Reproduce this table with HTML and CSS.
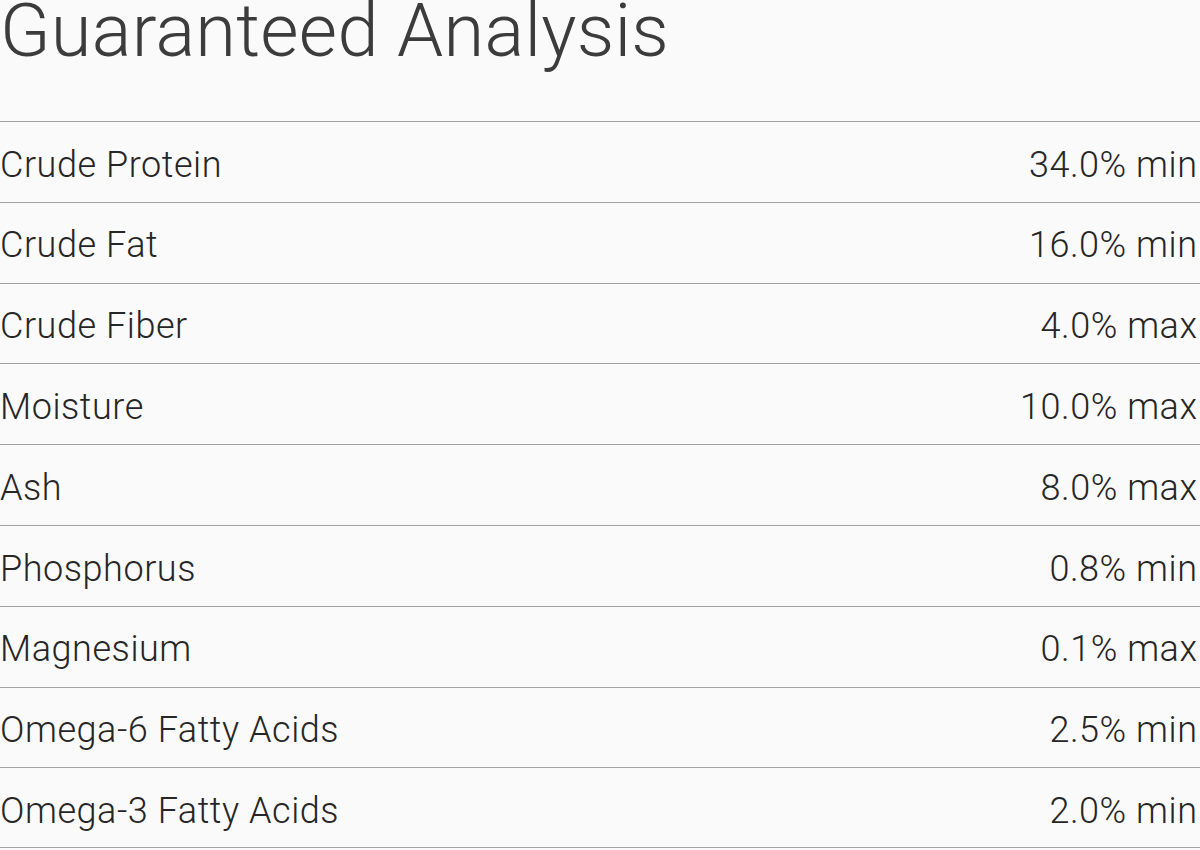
FILE: index.html
```html
<!DOCTYPE html>
<html>
<head>
<meta charset="utf-8">
<link rel="stylesheet" href="styles.css">
</head>
<body>
<div class="page">
  <h1 class="title">Guaranteed Analysis</h1>
  <div class="table">
    <div class="row"><span class="name">Crude Protein</span><span class="value">34.0% min</span></div>
    <div class="row"><span class="name">Crude Fat</span><span class="value">16.0% min</span></div>
    <div class="row"><span class="name">Crude Fiber</span><span class="value">4.0% max</span></div>
    <div class="row"><span class="name">Moisture</span><span class="value">10.0% max</span></div>
    <div class="row"><span class="name">Ash</span><span class="value">8.0% max</span></div>
    <div class="row"><span class="name">Phosphorus</span><span class="value">0.8% min</span></div>
    <div class="row"><span class="name">Magnesium</span><span class="value">0.1% max</span></div>
    <div class="row"><span class="name">Omega-6 Fatty Acids</span><span class="value">2.5% min</span></div>
    <div class="row"><span class="name">Omega-3 Fatty Acids</span><span class="value">2.0% min</span></div>
  </div>
</div>
</body>
</html>
```
FILE: styles.css
```css
html, body {
  margin: 0;
  padding: 0;
  background: #fafafa;
}
.page {
  width: 1200px;
  height: 850px;
  overflow: hidden;
  font-family: Roboto, "Liberation Sans", sans-serif;
  font-weight: 300;
}
.title {
  margin: 0;
  height: 121px;
  font-size: 74px;
  font-weight: 300;
  letter-spacing: 0.25px;
  line-height: 62px;
  color: #3c3c3c;
  box-sizing: border-box;
}
.table {
  display: flex;
  flex-direction: column;
}
.row {
  display: flex;
  justify-content: space-between;
  align-items: center;
  height: 80.8px;
  box-sizing: border-box;
  border-top: 1px solid #a2a2a2;
  padding: 5.5px 3px 0 0;
  font-size: 36px;
  letter-spacing: 0.55px;
  color: #262626;
}
.value {
  margin-right: -0.55px;
}
.row:last-child {
  border-bottom: 1px solid #a2a2a2;
}
```
